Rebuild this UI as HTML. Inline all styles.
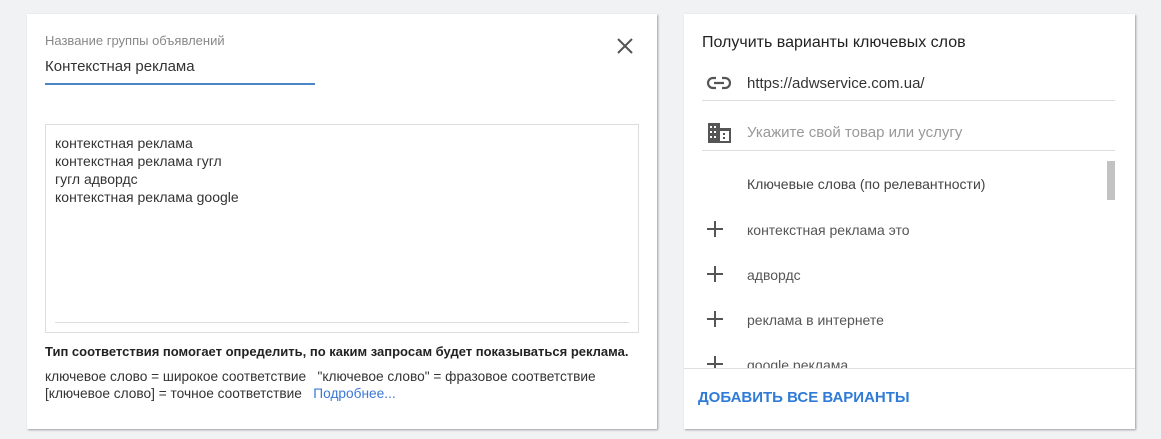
<!DOCTYPE html>
<html><head><meta charset="utf-8"><style>
*{margin:0;padding:0;box-sizing:border-box}
body{width:1161px;height:439px;background:#f1f2f4;font-family:"Liberation Sans",sans-serif;position:relative;overflow:hidden;color:#222}
.card{position:absolute;background:#fff;box-shadow:1px 1px 2px rgba(0,0,0,.35)}
.a{position:absolute;white-space:nowrap}
.p{position:absolute;left:23px}
</style></head><body>
<div class="card" style="left:27px;top:14px;width:630px;height:415px">
  <div class="a" style="left:18px;top:19px;font-size:13px;color:#888">Название группы объявлений</div>
  <div class="a" style="left:18px;top:44px;font-size:15px;color:#333">Контекстная реклама</div>
  <div class="a" style="left:18px;top:69px;width:270px;height:2px;background:#4a86c8"></div>
  <svg class="a" style="left:590px;top:24px" width="16" height="16" viewBox="0 0 16 16"><path d="M1 1L15 15M15 1L1 15" stroke="#555" stroke-width="2"/></svg>
  <div class="a" style="left:18px;top:110px;width:594px;height:209px;border:1px solid #ddd"></div>
  <div class="a" style="left:28px;top:120px;font-size:14px;line-height:18px;color:#333">контекстная реклама<br>контекстная реклама гугл<br>гугл адвордс<br>контекстная реклама google</div>
  <div class="a" style="left:28px;top:308px;width:574px;height:1px;background:#ddd"></div>
  <div class="a" style="left:18px;top:330px;font-size:13px;font-weight:bold;color:#222">Тип соответствия помогает определить, по каким запросам будет показываться реклама.</div>
  <div class="a" style="left:18px;top:354px;font-size:13.7px;line-height:17px;color:#333">ключевое слово = широкое соответствие &nbsp; "ключевое слово" = фразовое соответствие<br>[ключевое слово] = точное соответствие &nbsp; <span style="color:#3b78d8">Подробнее...</span></div>
</div>
<div class="card" style="left:684px;top:14px;width:451px;height:415px">
  <div class="a" style="left:18px;top:20px;font-size:16px;color:#222">Получить варианты ключевых слов</div>
  <svg class="a" style="left:23px;top:62px" width="24" height="14" viewBox="0 0 24 14"><path d="M9 2H6a5 5 0 0 0 0 10h3M15 2h3a5 5 0 0 1 0 10h-3M7 7h10" stroke="#555" stroke-width="2.2" fill="none"/></svg>
  <div class="a" style="left:63px;top:61px;font-size:15px;color:#333">https://adwservice.com.ua/</div>
  <div class="a" style="left:18px;top:86px;width:413px;height:1px;background:#ddd"></div>
  <svg class="a" style="left:24px;top:109px" width="23" height="20" viewBox="0 0 23 20"><path d="M0 0h12v5h11v15H0z" fill="#555"/><g fill="#fff"><rect x="2" y="3" width="2" height="2"/><rect x="6" y="3" width="2" height="2"/><rect x="2" y="8" width="2" height="2"/><rect x="6" y="8" width="2" height="2"/><rect x="2" y="13" width="2" height="2"/><rect x="6" y="13" width="2" height="2"/><rect x="12" y="8" width="9" height="10"/></g><g fill="#555"><rect x="15" y="10" width="2" height="2"/><rect x="15" y="14" width="2" height="2"/></g></svg>
  <div class="a" style="left:63px;top:110px;font-size:15px;color:#999">Укажите свой товар или услугу</div>
  <div class="a" style="left:18px;top:136px;width:413px;height:1px;background:#ddd"></div>
  <div class="a" style="left:423px;top:147px;width:8px;height:39px;background:#c2c2c2"></div>
  <div class="a" style="left:63px;top:162px;font-size:14px;color:#444">Ключевые слова (по релевантности)</div>
  <div style="position:absolute;left:0;top:190px;width:451px;height:164px;overflow:hidden">
    <svg class="p" style="top:17px" width="16" height="16" viewBox="0 0 16 16"><path d="M8 0V16M0 8H16" stroke="#555" stroke-width="2"/></svg>
    <div class="a" style="left:63px;top:18px;font-size:14px;color:#555">контекстная реклама это</div>
    <svg class="p" style="top:62px" width="16" height="16" viewBox="0 0 16 16"><path d="M8 0V16M0 8H16" stroke="#555" stroke-width="2"/></svg>
    <div class="a" style="left:63px;top:63px;font-size:14px;color:#555">адвордс</div>
    <svg class="p" style="top:107px" width="16" height="16" viewBox="0 0 16 16"><path d="M8 0V16M0 8H16" stroke="#555" stroke-width="2"/></svg>
    <div class="a" style="left:63px;top:108px;font-size:14px;color:#555">реклама в интернете</div>
    <svg class="p" style="top:152px" width="16" height="16" viewBox="0 0 16 16"><path d="M8 0V16M0 8H16" stroke="#555" stroke-width="2"/></svg>
    <div class="a" style="left:63px;top:153px;font-size:14px;color:#555">google реклама</div>
  </div>
  <div class="a" style="left:0;top:354px;width:451px;height:1px;background:#e0e0e0"></div>
  <div class="a" style="left:14px;top:375px;font-size:15px;font-weight:bold;color:#2f7bd6">ДОБАВИТЬ ВСЕ ВАРИАНТЫ</div>
</div>
</body></html>
